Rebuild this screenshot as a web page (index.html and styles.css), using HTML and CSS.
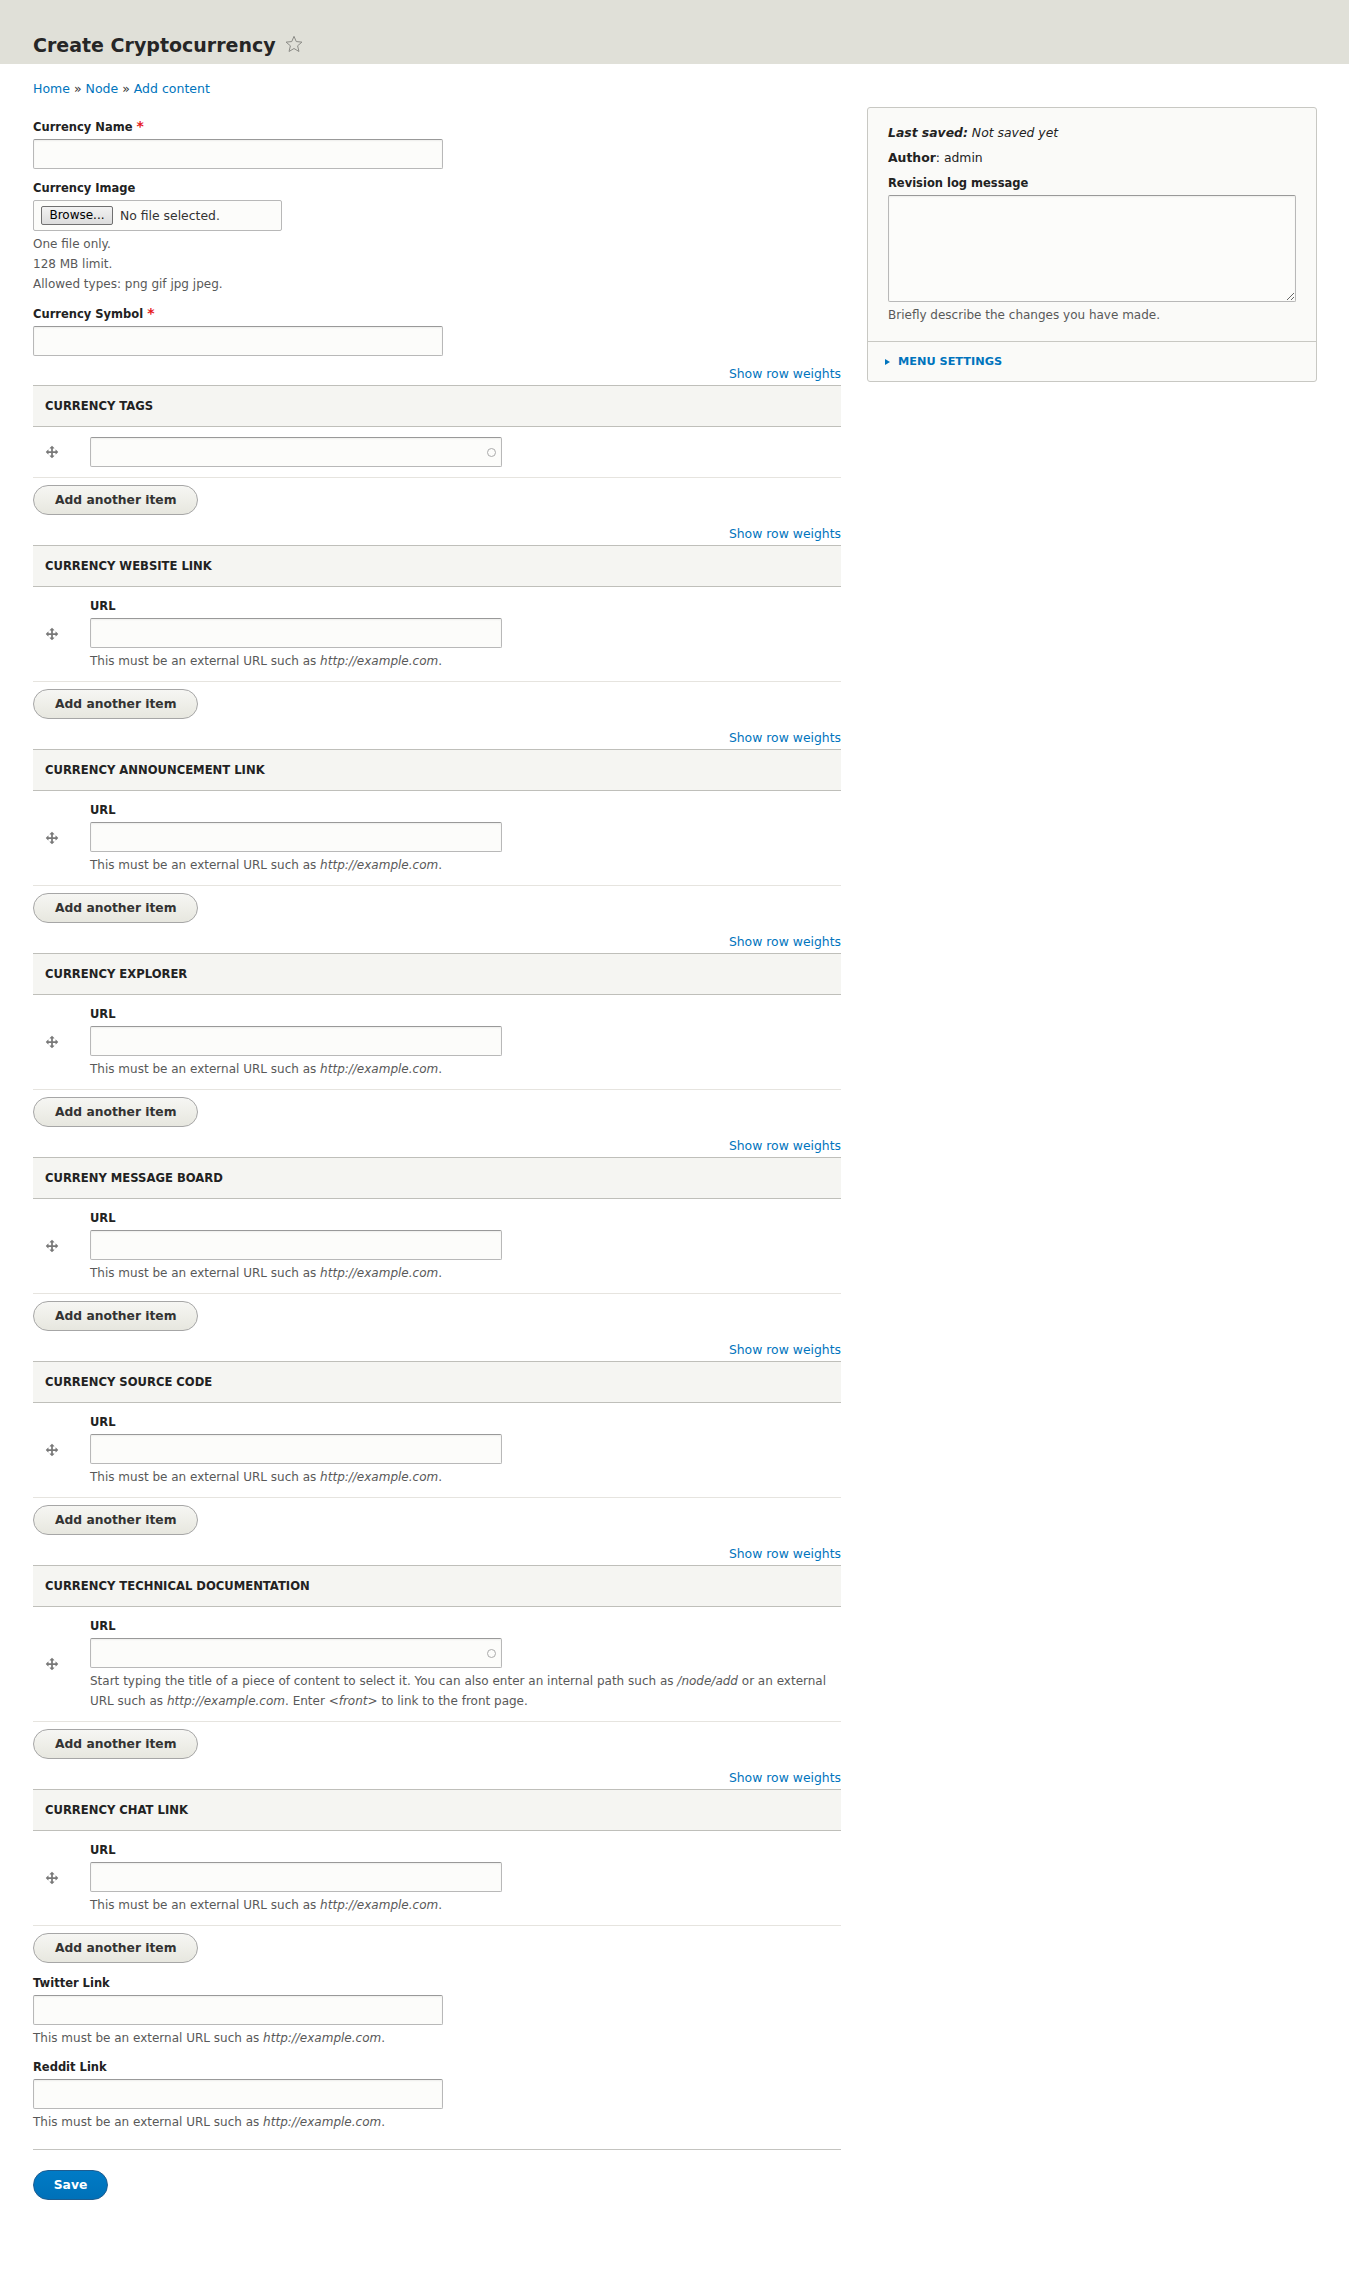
FILE: index.html
```html
<!DOCTYPE html>
<html lang="en">
<head>
  <meta charset="UTF-8" />
  <meta name="viewport" content="width=device-width, initial-scale=1.0" />
  <title>Create Cryptocurrency</title>
  <link rel="stylesheet" href="styles.css">
</head>
<body>
  <div class="page-header">
    <h1 class="page-title">
      Create Cryptocurrency
      <svg class="shortcut" width="18" height="18" viewBox="0 0 20 20"><polygon points="10,1.5 12.5,7.3 18.8,7.9 14,12 15.5,18.3 10,15 4.5,18.3 6,12 1.2,7.9 7.5,7.3" fill="none" stroke="#8a8a85" stroke-width="1.1" stroke-linejoin="round"/></svg>
    </h1>
  </div>

  <div class="breadcrumb">
    <a href="#">Home</a> » <a href="#">Node</a> » <a href="#">Add content</a>
  </div>

  <div class="layout">
    <div class="main">
      <div class="form-item">
        <label>Currency Name <span class="required">*</span></label>
        <input type="text" class="form-text" />
      </div>

      <div class="form-item">
        <label>Currency Image</label>
        <div class="form-file">
          <span class="browse">Browse...</span>
          <span>No file selected.</span>
        </div>
        <div class="description">
          One file only.<br>128 MB limit.<br>Allowed types: png gif jpg jpeg.
        </div>
      </div>

      <div class="form-item">
        <label>Currency Symbol <span class="required">*</span></label>
        <input type="text" class="form-text" />
      </div>

      <!-- multi-value fields -->
      <div class="field-multiple">
        <div class="weights"><a href="#">Show row weights</a></div>
        <div class="field-header">CURRENCY TAGS</div>
        <div class="field-row">
          <div class="drag"><svg width="14" height="14" viewBox="0 0 16 16"><path fill="#787878" d="M14.904 7.753l-2.373-2.372c-.291-.292-.529-.193-.529.22v1.399h-3v-3h1.398c.414 0 .512-.239.221-.53l-2.371-2.372c-.137-.136-.36-.136-.497 0l-2.372 2.372c-.292.292-.193.53.22.53h1.399v3h-3v-1.369c0-.413-.239-.511-.53-.22l-2.372 2.372c-.136.136-.136.359 0 .494l2.372 2.372c.291.292.53.192.53-.219v-1.43h3v3h-1.4c-.413 0-.511.238-.22.529l2.374 2.373c.137.137.36.137.495 0l2.373-2.373c.29-.291.19-.529-.222-.529h-1.398v-3h3v1.4c0 .412.238.511.529.219l2.373-2.371c.137-.137.137-.359 0-.495z"/></svg></div>
          <div class="cell">
            <div class="form-autocomplete"><span class="throbber"></span></div>
          </div>
        </div>
        <button class="button">Add another item</button>
      </div>

      <div class="field-multiple">
        <div class="weights"><a href="#">Show row weights</a></div>
        <div class="field-header">CURRENCY WEBSITE LINK</div>
        <div class="field-row">
          <div class="drag"><svg width="14" height="14" viewBox="0 0 16 16"><path fill="#787878" d="M14.904 7.753l-2.373-2.372c-.291-.292-.529-.193-.529.22v1.399h-3v-3h1.398c.414 0 .512-.239.221-.53l-2.371-2.372c-.137-.136-.36-.136-.497 0l-2.372 2.372c-.292.292-.193.53.22.53h1.399v3h-3v-1.369c0-.413-.239-.511-.53-.22l-2.372 2.372c-.136.136-.136.359 0 .494l2.372 2.372c.291.292.53.192.53-.219v-1.43h3v3h-1.4c-.413 0-.511.238-.22.529l2.374 2.373c.137.137.36.137.495 0l2.373-2.373c.29-.291.19-.529-.222-.529h-1.398v-3h3v1.4c0 .412.238.511.529.219l2.373-2.371c.137-.137.137-.359 0-.495z"/></svg></div>
          <div class="cell">
            <label>URL</label>
            <input type="text" class="form-text url" />
            <div class="description">This must be an external URL such as <em>http://example.com</em>.</div>
          </div>
        </div>
        <button class="button">Add another item</button>
      </div>

      <div class="field-multiple">
        <div class="weights"><a href="#">Show row weights</a></div>
        <div class="field-header">CURRENCY ANNOUNCEMENT LINK</div>
        <div class="field-row">
          <div class="drag"><svg width="14" height="14" viewBox="0 0 16 16"><path fill="#787878" d="M14.904 7.753l-2.373-2.372c-.291-.292-.529-.193-.529.22v1.399h-3v-3h1.398c.414 0 .512-.239.221-.53l-2.371-2.372c-.137-.136-.36-.136-.497 0l-2.372 2.372c-.292.292-.193.53.22.53h1.399v3h-3v-1.369c0-.413-.239-.511-.53-.22l-2.372 2.372c-.136.136-.136.359 0 .494l2.372 2.372c.291.292.53.192.53-.219v-1.43h3v3h-1.4c-.413 0-.511.238-.22.529l2.374 2.373c.137.137.36.137.495 0l2.373-2.373c.29-.291.19-.529-.222-.529h-1.398v-3h3v1.4c0 .412.238.511.529.219l2.373-2.371c.137-.137.137-.359 0-.495z"/></svg></div>
          <div class="cell">
            <label>URL</label>
            <input type="text" class="form-text url" />
            <div class="description">This must be an external URL such as <em>http://example.com</em>.</div>
          </div>
        </div>
        <button class="button">Add another item</button>
      </div>

      <div class="field-multiple">
        <div class="weights"><a href="#">Show row weights</a></div>
        <div class="field-header">CURRENCY EXPLORER</div>
        <div class="field-row">
          <div class="drag"><svg width="14" height="14" viewBox="0 0 16 16"><path fill="#787878" d="M14.904 7.753l-2.373-2.372c-.291-.292-.529-.193-.529.22v1.399h-3v-3h1.398c.414 0 .512-.239.221-.53l-2.371-2.372c-.137-.136-.36-.136-.497 0l-2.372 2.372c-.292.292-.193.53.22.53h1.399v3h-3v-1.369c0-.413-.239-.511-.53-.22l-2.372 2.372c-.136.136-.136.359 0 .494l2.372 2.372c.291.292.53.192.53-.219v-1.43h3v3h-1.4c-.413 0-.511.238-.22.529l2.374 2.373c.137.137.36.137.495 0l2.373-2.373c.29-.291.19-.529-.222-.529h-1.398v-3h3v1.4c0 .412.238.511.529.219l2.373-2.371c.137-.137.137-.359 0-.495z"/></svg></div>
          <div class="cell">
            <label>URL</label>
            <input type="text" class="form-text url" />
            <div class="description">This must be an external URL such as <em>http://example.com</em>.</div>
          </div>
        </div>
        <button class="button">Add another item</button>
      </div>

      <div class="field-multiple">
        <div class="weights"><a href="#">Show row weights</a></div>
        <div class="field-header">CURRENY MESSAGE BOARD</div>
        <div class="field-row">
          <div class="drag"><svg width="14" height="14" viewBox="0 0 16 16"><path fill="#787878" d="M14.904 7.753l-2.373-2.372c-.291-.292-.529-.193-.529.22v1.399h-3v-3h1.398c.414 0 .512-.239.221-.53l-2.371-2.372c-.137-.136-.36-.136-.497 0l-2.372 2.372c-.292.292-.193.53.22.53h1.399v3h-3v-1.369c0-.413-.239-.511-.53-.22l-2.372 2.372c-.136.136-.136.359 0 .494l2.372 2.372c.291.292.53.192.53-.219v-1.43h3v3h-1.4c-.413 0-.511.238-.22.529l2.374 2.373c.137.137.36.137.495 0l2.373-2.373c.29-.291.19-.529-.222-.529h-1.398v-3h3v1.4c0 .412.238.511.529.219l2.373-2.371c.137-.137.137-.359 0-.495z"/></svg></div>
          <div class="cell">
            <label>URL</label>
            <input type="text" class="form-text url" />
            <div class="description">This must be an external URL such as <em>http://example.com</em>.</div>
          </div>
        </div>
        <button class="button">Add another item</button>
      </div>

      <div class="field-multiple">
        <div class="weights"><a href="#">Show row weights</a></div>
        <div class="field-header">CURRENCY SOURCE CODE</div>
        <div class="field-row">
          <div class="drag"><svg width="14" height="14" viewBox="0 0 16 16"><path fill="#787878" d="M14.904 7.753l-2.373-2.372c-.291-.292-.529-.193-.529.22v1.399h-3v-3h1.398c.414 0 .512-.239.221-.53l-2.371-2.372c-.137-.136-.36-.136-.497 0l-2.372 2.372c-.292.292-.193.53.22.53h1.399v3h-3v-1.369c0-.413-.239-.511-.53-.22l-2.372 2.372c-.136.136-.136.359 0 .494l2.372 2.372c.291.292.53.192.53-.219v-1.43h3v3h-1.4c-.413 0-.511.238-.22.529l2.374 2.373c.137.137.36.137.495 0l2.373-2.373c.29-.291.19-.529-.222-.529h-1.398v-3h3v1.4c0 .412.238.511.529.219l2.373-2.371c.137-.137.137-.359 0-.495z"/></svg></div>
          <div class="cell">
            <label>URL</label>
            <input type="text" class="form-text url" />
            <div class="description">This must be an external URL such as <em>http://example.com</em>.</div>
          </div>
        </div>
        <button class="button">Add another item</button>
      </div>

      <div class="field-multiple">
        <div class="weights"><a href="#">Show row weights</a></div>
        <div class="field-header">CURRENCY TECHNICAL DOCUMENTATION</div>
        <div class="field-row">
          <div class="drag"><svg width="14" height="14" viewBox="0 0 16 16"><path fill="#787878" d="M14.904 7.753l-2.373-2.372c-.291-.292-.529-.193-.529.22v1.399h-3v-3h1.398c.414 0 .512-.239.221-.53l-2.371-2.372c-.137-.136-.36-.136-.497 0l-2.372 2.372c-.292.292-.193.53.22.53h1.399v3h-3v-1.369c0-.413-.239-.511-.53-.22l-2.372 2.372c-.136.136-.136.359 0 .494l2.372 2.372c.291.292.53.192.53-.219v-1.43h3v3h-1.4c-.413 0-.511.238-.22.529l2.374 2.373c.137.137.36.137.495 0l2.373-2.373c.29-.291.19-.529-.222-.529h-1.398v-3h3v1.4c0 .412.238.511.529.219l2.373-2.371c.137-.137.137-.359 0-.495z"/></svg></div>
          <div class="cell">
            <label>URL</label>
            <div class="form-autocomplete"><span class="throbber"></span></div>
            <div class="description">Start typing the title of a piece of content to select it. You can also enter an internal path such as <em>/node/add</em> or an external<br>URL such as <em>http://example.com</em>. Enter <em>&lt;front&gt;</em> to link to the front page.</div>
          </div>
        </div>
        <button class="button">Add another item</button>
      </div>

      <div class="field-multiple">
        <div class="weights"><a href="#">Show row weights</a></div>
        <div class="field-header">CURRENCY CHAT LINK</div>
        <div class="field-row">
          <div class="drag"><svg width="14" height="14" viewBox="0 0 16 16"><path fill="#787878" d="M14.904 7.753l-2.373-2.372c-.291-.292-.529-.193-.529.22v1.399h-3v-3h1.398c.414 0 .512-.239.221-.53l-2.371-2.372c-.137-.136-.36-.136-.497 0l-2.372 2.372c-.292.292-.193.53.22.53h1.399v3h-3v-1.369c0-.413-.239-.511-.53-.22l-2.372 2.372c-.136.136-.136.359 0 .494l2.372 2.372c.291.292.53.192.53-.219v-1.43h3v3h-1.4c-.413 0-.511.238-.22.529l2.374 2.373c.137.137.36.137.495 0l2.373-2.373c.29-.291.19-.529-.222-.529h-1.398v-3h3v1.4c0 .412.238.511.529.219l2.373-2.371c.137-.137.137-.359 0-.495z"/></svg></div>
          <div class="cell">
            <label>URL</label>
            <input type="text" class="form-text url" />
            <div class="description">This must be an external URL such as <em>http://example.com</em>.</div>
          </div>
        </div>
        <button class="button">Add another item</button>
      </div>

      <div class="form-item">
        <label>Twitter Link</label>
        <input type="text" class="form-text" />
        <div class="description">This must be an external URL such as <em>http://example.com</em>.</div>
      </div>

      <div class="form-item">
        <label>Reddit Link</label>
        <input type="text" class="form-text" />
        <div class="description">This must be an external URL such as <em>http://example.com</em>.</div>
      </div>

      <div class="form-actions">
        <button class="button button-primary">Save</button>
      </div>
    </div>

    <aside class="entity-meta">
      <div class="meta-section">
        <p class="meta-item"><em><strong>Last saved:</strong> Not saved yet</em></p>
        <p class="meta-item"><strong>Author</strong>: admin</p>
        <div class="form-item">
          <label>Revision log message</label>
          <textarea class="form-textarea"></textarea>
          <div class="description">Briefly describe the changes you have made.</div>
        </div>
      </div>
      <div class="meta-details"><span class="arrow"></span>MENU SETTINGS</div>
    </aside>
  </div>
</body>
</html>
```

FILE: styles.css
```css
body {
  margin: 0;
  font-family: "DejaVu Sans", sans-serif;
  font-size: 12.4px;
  color: #222;
  background: #fff;
}
a {
  color: #0074bd;
  text-decoration: none;
}
.page-header {
  background: #e0e0d8;
  height: 64px;
  box-sizing: border-box;
  padding: 33px 0 0 33px;
}
.page-title {
  display: flex;
  align-items: center;
  gap: 9px;
  margin: 0;
  font-size: 19px;
  line-height: 24px;
  font-weight: bold;
  color: #262626;
}
.shortcut {
  margin-top: -3px;
}
.breadcrumb {
  margin: 16px 33px 0;
  font-size: 12.5px;
  line-height: 18px;
  color: #333;
}
.layout {
  display: flex;
  align-items: flex-start;
  gap: 26px;
  padding: 9px 32px 0 33px;
}
.main {
  flex: 0 0 808px;
  padding-top: 10px;
}
.form-item {
  margin-bottom: 10px;
}
label {
  display: block;
  font-size: 11.5px;
  font-weight: bold;
  line-height: 18px;
  margin-bottom: 3px;
  color: #222;
}
.required {
  color: #e6181d;
  font-size: 14px;
}
.form-text,
.form-autocomplete,
.form-textarea {
  display: block;
  box-sizing: border-box;
  width: 410px;
  height: 30px;
  margin: 0;
  border: 1px solid #b8b8b8;
  border-top-color: #999;
  border-radius: 2px;
  background: #fcfcfa;
  box-shadow: inset 0 1px 2px rgba(0,0,0,0.06);
}
.form-text.url,
.form-autocomplete {
  width: 412px;
}
.form-autocomplete {
  display: flex;
  align-items: center;
  justify-content: flex-end;
  padding-right: 5px;
}
.throbber {
  width: 7px;
  height: 7px;
  border: 1.5px solid #aaa;
  border-radius: 50%;
}
.form-file {
  display: flex;
  align-items: center;
  gap: 7px;
  box-sizing: border-box;
  width: 249px;
  height: 31px;
  padding-left: 7px;
  border: 1px solid #b8b8b8;
  border-radius: 2px;
  background: #fcfcfa;
  font-size: 12.4px;
  color: #333;
}
.browse {
  box-sizing: border-box;
  width: 72px;
  height: 19px;
  line-height: 17px;
  text-align: center;
  border: 1px solid #707070;
  border-radius: 2px;
  background: linear-gradient(#f2f2f2, #dcdcdc);
  color: #000;
  font-size: 12px;
}
.description {
  margin-top: 3px;
  font-size: 12px;
  line-height: 20px;
  color: #595959;
}
.weights {
  text-align: right;
  font-size: 12.4px;
  line-height: 16px;
  margin-bottom: 3px;
}
.field-multiple {
  margin-bottom: 11px;
}
.field-header {
  box-sizing: border-box;
  height: 42px;
  line-height: 40px;
  padding-left: 12px;
  border-top: 1px solid #bfbfba;
  border-bottom: 1px solid #bfbfba;
  background: #f5f5f2;
  font-size: 11.6px;
  font-weight: bold;
  color: #222;
}
.field-row {
  display: flex;
  align-items: center;
  padding: 10px 0;
  border-bottom: 1px solid #e6e4df;
}
.drag {
  flex: 0 0 57px;
  box-sizing: border-box;
  padding-left: 12px;
  display: flex;
  align-items: center;
}
.cell {
  flex: 1;
  padding-right: 12px;
}
.button {
  display: block;
  box-sizing: border-box;
  height: 30px;
  margin-top: 7px;
  padding: 0 21px;
  border: 1px solid #a6a6a6;
  border-radius: 20em;
  background: linear-gradient(#f6f6f3, #e7e7df);
  font-family: "DejaVu Sans", sans-serif;
  font-size: 12.3px;
  font-weight: bold;
  color: #333;
  cursor: pointer;
}
.form-actions {
  margin-top: 17px;
  padding-top: 20px;
  border-top: 1px solid #c4c4c0;
}
.button-primary {
  margin: 0;
  width: 75px;
  padding: 0;
  border-color: #1e5c90;
  background: linear-gradient(#007bc6, #0071b8);
  color: #fff;
}
.entity-meta {
  flex: 1;
  border: 1px solid #c8c8c3;
  border-radius: 3px;
  background: #fafaf8;
}
.meta-section {
  padding: 16px 20px 16px 20px;
  border-bottom: 1px solid #c8c8c3;
}
.meta-item {
  margin: 0 0 7px;
  line-height: 18px;
}
.meta-section .form-item {
  margin: 0;
}
.form-textarea {
  width: 100%;
  height: 107px;
  resize: vertical;
}
.meta-details {
  display: flex;
  align-items: center;
  height: 39px;
  padding-left: 17px;
  font-size: 11.3px;
  font-weight: bold;
  color: #0074bd;
}
.arrow {
  width: 0;
  height: 0;
  margin-right: 8px;
  border-left: 5px solid #0074bd;
  border-top: 3.5px solid transparent;
  border-bottom: 3.5px solid transparent;
}
```
